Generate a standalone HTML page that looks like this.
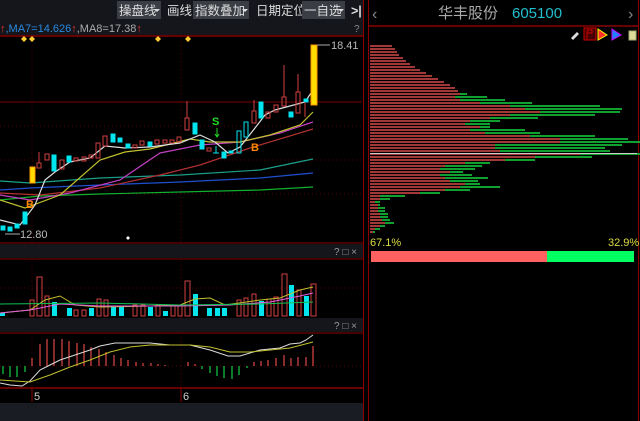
<!DOCTYPE html><html><head><meta charset="utf-8"><style>
body{margin:0;background:#000;width:640px;height:421px;overflow:hidden;font-family:"Liberation Sans","Noto Sans CJK SC",sans-serif}
svg{display:block}
</style></head><body>
<svg width="640" height="421" xmlns="http://www.w3.org/2000/svg" font-family="Liberation Sans, Noto Sans CJK SC, sans-serif">
<rect width="640" height="421" fill="#000"/>
<rect x="0" y="0" width="364" height="35" fill="#14161b"/>
<g font-size="12.5" fill="#ddd">
<rect x="117" y="1" width="44" height="18" fill="#3a3d44"/><text x="119" y="15">操盘线</text><path d="M154 9l3 3 3-3z" fill="#ddd"/>
<text x="167" y="15">画线</text>
<rect x="193" y="1" width="56" height="18" fill="#3a3d44"/><text x="195" y="15">指数叠加</text><path d="M242 9l3 3 3-3z" fill="#ddd"/>
<text x="256" y="15">日期定位</text>
<rect x="302" y="1" width="43" height="18" fill="#3a3d44"/><text x="304" y="15">一自选</text><path d="M338 9l3 3 3-3z" fill="#ddd"/>
<text x="351" y="15" font-weight="bold">&gt;|</text>
</g>
<text x="0" y="32" font-size="11"><tspan fill="#e03030">↑</tspan><tspan fill="#2a8ae0">,MA7=14.626</tspan><tspan fill="#e03030">↑</tspan><tspan fill="#aaa">,MA8=17.38</tspan><tspan fill="#e03030">↑</tspan></text>
<text x="354" y="32" font-size="10" fill="#888">?</text>
<line x1="0" y1="36" x2="364" y2="36" stroke="#8a0000" stroke-width="1.5"/>
<g stroke="#5a0000" stroke-dasharray="1,3">
<line x1="0" y1="126" x2="362" y2="126"/><line x1="0" y1="160" x2="362" y2="160"/><line x1="0" y1="194" x2="362" y2="194"/>
<line x1="32" y1="37" x2="32" y2="388"/><line x1="181" y1="37" x2="181" y2="388"/>
<line x1="0" y1="288" x2="362" y2="288"/><line x1="0" y1="366" x2="362" y2="366"/>
</g>
<line x1="0" y1="102" x2="362" y2="102" stroke="#7a0000"/>
<g fill="#ffcc33"><path d="M24 36l3 3-3 3-3-3z"/><path d="M32 36l3 3-3 3-3-3z"/><path d="M158 36l3 3-3 3-3-3z"/><path d="M188 36l3 3-3 3-3-3z"/></g>
<g fill="none" stroke-width="1.2">
<polyline stroke="#1aa08a" points="0,181 30,183 100,178 180,175 260,170 313,159"/>
<polyline stroke="#2050d0" points="0,190 30,188 100,185 180,182 260,178 313,173"/>
<polyline stroke="#10b030" points="0,200 40,196 100,194 180,192 260,190 313,187"/>
<polyline stroke="#b03030" points="0,193 40,195 100,188 160,175 200,165 250,148 313,129"/>
<polyline stroke="#c040c0" points="0,195 30,200 70,193 120,180 160,153 200,145 240,142 280,133 313,122"/>
<polyline stroke="#c0c030" points="0,200 25,208 60,195 100,160 125,152 150,149 190,139 210,142 240,142 270,135 300,125 313,112"/>
<polyline stroke="#ddd" points="0,220 20,225 35,205 45,180 55,172 70,162 90,158 105,146 125,148 150,147 180,143 200,135 215,142 228,153 240,147 255,128 265,115 275,110 290,106 305,102 313,90"/>
</g>
<g stroke-width="1">
<g fill="#00e5ee" stroke="#00e5ee">
<rect x="1" y="226" width="4" height="4"/><rect x="8" y="227" width="4" height="4"/><rect x="15" y="224" width="4" height="4"/>
<rect x="23" y="212" width="4" height="12"/><rect x="52" y="155" width="4" height="16"/><rect x="67" y="156" width="4" height="6"/>
<rect x="111" y="134" width="4" height="8"/><rect x="118" y="138" width="4" height="4"/><rect x="126" y="144" width="4" height="4"/><rect x="148" y="142" width="4" height="4"/>
<rect x="193" y="123" width="4" height="11"/><rect x="200" y="140" width="4" height="9"/><rect x="222" y="152" width="4" height="6"/><rect x="229" y="151" width="4" height="2"/>
<rect x="237" y="131" width="4" height="22" fill="none"/><rect x="244" y="122" width="4" height="15" fill="none"/><rect x="259" y="102" width="4" height="16"/><rect x="289" y="112" width="4" height="5"/><rect x="304" y="99" width="4" height="3"/>
<line x1="216" y1="146" x2="216" y2="153"/><line x1="213" y1="153" x2="219" y2="153"/>
</g>
<g fill="none" stroke="#d04040">
<rect x="37" y="163" width="4" height="5"/><line x1="39" y1="152" x2="39" y2="163"/><rect x="45" y="154" width="4" height="6"/><rect x="60" y="160" width="4" height="9"/>
<rect x="74" y="158" width="4" height="3"/><rect x="82" y="157" width="4" height="4"/><rect x="89" y="155" width="4" height="3"/><rect x="96" y="143" width="4" height="15"/><rect x="103" y="136" width="4" height="10"/>
<rect x="133" y="145" width="4" height="3"/><rect x="140" y="141" width="4" height="4"/><rect x="155" y="140" width="4" height="4"/><rect x="163" y="140" width="4" height="3"/><rect x="170" y="140" width="4" height="3"/><rect x="177" y="137" width="4" height="5"/>
<rect x="185" y="118" width="4" height="12"/><line x1="187" y1="101" x2="187" y2="118"/><rect x="207" y="148" width="4" height="3"/>
<rect x="252" y="111" width="4" height="12"/><line x1="254" y1="100" x2="254" y2="111"/><rect x="266" y="112" width="4" height="6"/><rect x="274" y="105" width="4" height="7"/>
<rect x="282" y="97" width="4" height="9"/><line x1="284" y1="65" x2="284" y2="97"/><rect x="296" y="92" width="4" height="21"/><line x1="298" y1="74" x2="298" y2="92"/><line x1="305" y1="102" x2="305" y2="117"/>
</g>
<rect x="30" y="167" width="5" height="16" fill="#ffdd00" stroke="#ff9900"/>
<rect x="311" y="45" width="6" height="60" fill="#ffdd00" stroke="#ff9900"/>
</g>
<line x1="317" y1="45" x2="330" y2="45" stroke="#aaa"/><text x="331" y="49" font-size="11" fill="#bbb">18.41</text>
<line x1="5" y1="234" x2="20" y2="234" stroke="#aaa"/><text x="20" y="238" font-size="11" fill="#bbb">12.80</text>
<text x="26" y="208" font-size="11" font-weight="bold" fill="#ff8800">B</text><text x="251" y="151" font-size="11" font-weight="bold" fill="#ff8800">B</text>
<text x="212" y="125" font-size="11" font-weight="bold" fill="#22dd22">S</text><path d="M217 128v8m-2-2l2 3 2-3" stroke="#22dd22" fill="none"/>
<path d="M128 236l2 2-2 2-2-2z" fill="#fff"/>
<rect x="0" y="244" width="364" height="14" fill="#14161b"/><text x="334" y="255" font-size="10" fill="#999">? □ ×</text>
<line x1="0" y1="243" x2="364" y2="243" stroke="#8a0000"/><line x1="0" y1="259" x2="364" y2="259" stroke="#8a0000"/>
<g fill="none" stroke="#d04040">
<rect x="30" y="300" width="4" height="16"/><rect x="37" y="277" width="5" height="39"/><rect x="45" y="296" width="4" height="20"/><rect x="74" y="310" width="4" height="6"/><rect x="82" y="310" width="4" height="6"/><rect x="97" y="299" width="4" height="17"/><rect x="104" y="300" width="4" height="16"/>
<rect x="133" y="305" width="4" height="11"/><rect x="141" y="305" width="4" height="11"/><rect x="156" y="305" width="4" height="11"/><rect x="171" y="305" width="4" height="11"/><rect x="178" y="305" width="4" height="11"/><rect x="185" y="281" width="5" height="35"/>
<rect x="237" y="300" width="4" height="16"/><rect x="244" y="298" width="4" height="18"/><rect x="252" y="294" width="4" height="22"/><rect x="267" y="299" width="4" height="17"/><rect x="274" y="297" width="4" height="19"/><rect x="282" y="274" width="5" height="42"/><rect x="297" y="290" width="4" height="26"/><rect x="311" y="284" width="5" height="32"/>
</g>
<g fill="#00e5ee">
<rect x="0" y="313" width="5" height="3"/><rect x="52" y="302" width="5" height="14"/><rect x="67" y="308" width="5" height="8"/><rect x="89" y="308" width="5" height="8"/><rect x="111" y="306" width="5" height="10"/><rect x="119" y="307" width="5" height="9"/><rect x="148" y="307" width="5" height="9"/><rect x="163" y="311" width="5" height="5"/>
<rect x="193" y="294" width="5" height="22"/><rect x="207" y="308" width="5" height="8"/><rect x="215" y="308" width="5" height="8"/><rect x="222" y="308" width="5" height="8"/><rect x="259" y="301" width="5" height="15"/><rect x="289" y="285" width="5" height="31"/><rect x="304" y="296" width="5" height="20"/>
</g>
<g fill="none" stroke-width="1">
<polyline stroke="#c0c030" points="0,313 30,310 45,300 60,296 75,305 100,307 150,306 180,305 195,299 210,298 225,305 260,300 280,298 300,290 313,287"/>
<polyline stroke="#e060e0" points="0,313 30,310 60,304 100,306 180,306 230,305 270,302 300,296 313,293"/>
<polyline stroke="#10c050" points="0,304 100,303 180,305 260,304 313,302"/>
</g>
<rect x="0" y="318" width="364" height="14" fill="#14161b"/><text x="334" y="329" font-size="10" fill="#999">? □ ×</text>
<line x1="0" y1="333" x2="364" y2="333" stroke="#8a0000"/>
<g stroke="#d04040" stroke-width="1.3">
<path d="M32 366v-8M40 366v-22M47 366v-27M54 366v-27M62 366v-27M69 366v-25M77 366v-23M84 366v-22M91 366v-19M99 366v-17M106 366v-14M114 366v-11M121 366v-8M128 366v-6M136 366v-4M143 366v-3M151 366v-3M158 366v-2M165 366v-1M188 366v-4M195 366v-2M254 366v-4M261 366v-5M268 366v-6M276 366v-8M284 366v-11M291 366v-8M298 366v-9M306 366v-9M313 366v-20"/>
</g>
<g stroke="#10c040" stroke-width="1.3"><path d="M3 366v8M10 366v11M17 366v11M25 366v6M202 366v3M210 366v7M217 366v10M224 366v12M232 366v13M239 366v9M247 366v2"/></g>
<polyline fill="none" stroke="#ddd" points="0,383 10,385 22,386 30,381 40,370 50,365 60,360 75,355 90,350 100,346 115,343 130,343 150,343 170,345 190,345 210,350 228,356 240,356 260,350 280,348 290,344 300,343 306,340 313,335"/>
<polyline fill="none" stroke="#c0c030" points="0,380 15,381 30,382 50,375 70,367 90,360 110,352 130,347 150,345 170,345 190,345 210,347 230,352 250,352 270,350 290,348 313,342"/>
<line x1="0" y1="388" x2="364" y2="388" stroke="#8a0000" stroke-width="1.5"/>
<line x1="32" y1="388" x2="32" y2="402" stroke="#8a0000"/><line x1="181" y1="388" x2="181" y2="402" stroke="#8a0000"/>
<text x="34" y="400" font-size="11" fill="#ccc">5</text><text x="183" y="400" font-size="11" fill="#ccc">6</text>
<rect x="0" y="403" width="364" height="18" fill="#1a1c24"/>
<line x1="363.5" y1="0" x2="363.5" y2="421" stroke="#8a0000"/>
<line x1="368.5" y1="0" x2="368.5" y2="421" stroke="#8a0000"/>
<line x1="638.5" y1="0" x2="638.5" y2="421" stroke="#8a0000"/>
<text x="372" y="19" font-size="16" fill="#888">‹</text><text x="628" y="19" font-size="16" fill="#888">›</text>
<text x="438" y="18" font-size="15" fill="#aaa">华丰股份</text><text x="512" y="18" font-size="15" fill="#20c0d0">605100</text>
<line x1="369" y1="26" x2="639" y2="26" stroke="#8a0000" stroke-width="1.5"/>
<path d="M571 38l6-6 2 2-6 6z" fill="#ddd"/>
<rect x="584" y="28" width="12" height="12" fill="#400" stroke="#c00"/><path d="M587 30v9M587 30h5v3h-5" stroke="#c00" fill="none"/>
<path d="M598 29v11l9-5z" fill="#ff3030" stroke="#ff0"/><path d="M612 29v11l9-5z" fill="#2080ff" stroke="#c0f"/>
<rect x="629" y="31" width="7" height="9" fill="#dd9" stroke="#aa7"/>
<g id="dist"></g>
<text x="370" y="246" font-size="11" fill="#dddd44">67.1%</text><text x="608" y="246" font-size="11" fill="#dddd44">32.9%</text>
<rect x="371" y="251" width="176" height="11" fill="#ff6060"/><rect x="547" y="251" width="87" height="11" fill="#00ff60"/>
</svg>
<script>
var d=[[45,22,0],[48,25,0],[51,27,0],[54,29,0],[57,33,0],[60,36,0],[63,40,0],[66,45,0],[69,50,0],[72,56,0],[75,62,0],[78,68,0],[81,74,0],[84,80,0],[87,85,0],[90,88,0],[93,90,97],[96,85,117],[99,90,135],[102,110,162],[105,140,230],[108,155,252],[111,170,250],[114,140,225],[117,120,168],[120,100,130],[123,95,120],[126,110,120],[129,100,155],[132,115,170],[135,160,225],[138,190,258],[141,190,270],[144,125,252],[147,125,235],[150,130,240],[153,210,270],[156,165,222],[159,135,165],[162,95,120],[165,75,112],[168,70,105],[171,80,93],[174,70,102],[177,75,118],[180,80,108],[183,95,110],[186,90,130],[189,75,100],[192,50,70],[195,10,35],[198,10,20],[201,5,10],[204,8,10],[207,8,15],[210,8,15],[213,10,18],[216,10,18],[219,12,20],[222,15,24],[225,10,15],[228,5,10],[231,3,5]];
var g=document.getElementById('dist'),s='';
d.forEach(function(r){var y=r[0];if(r[2]>r[1])s+='<rect x="'+(370+r[1])+'" y="'+y+'" width="'+(r[2]-r[1])+'" height="2" fill="#10a030"/>';s+='<rect x="370" y="'+y+'" width="'+r[1]+'" height="2" fill="#a03838"/>';});
s+='<line x1="370" y1="153.5" x2="637" y2="153.5" stroke="#ccc"/>';
g.innerHTML=s;
</script>
</body></html>
